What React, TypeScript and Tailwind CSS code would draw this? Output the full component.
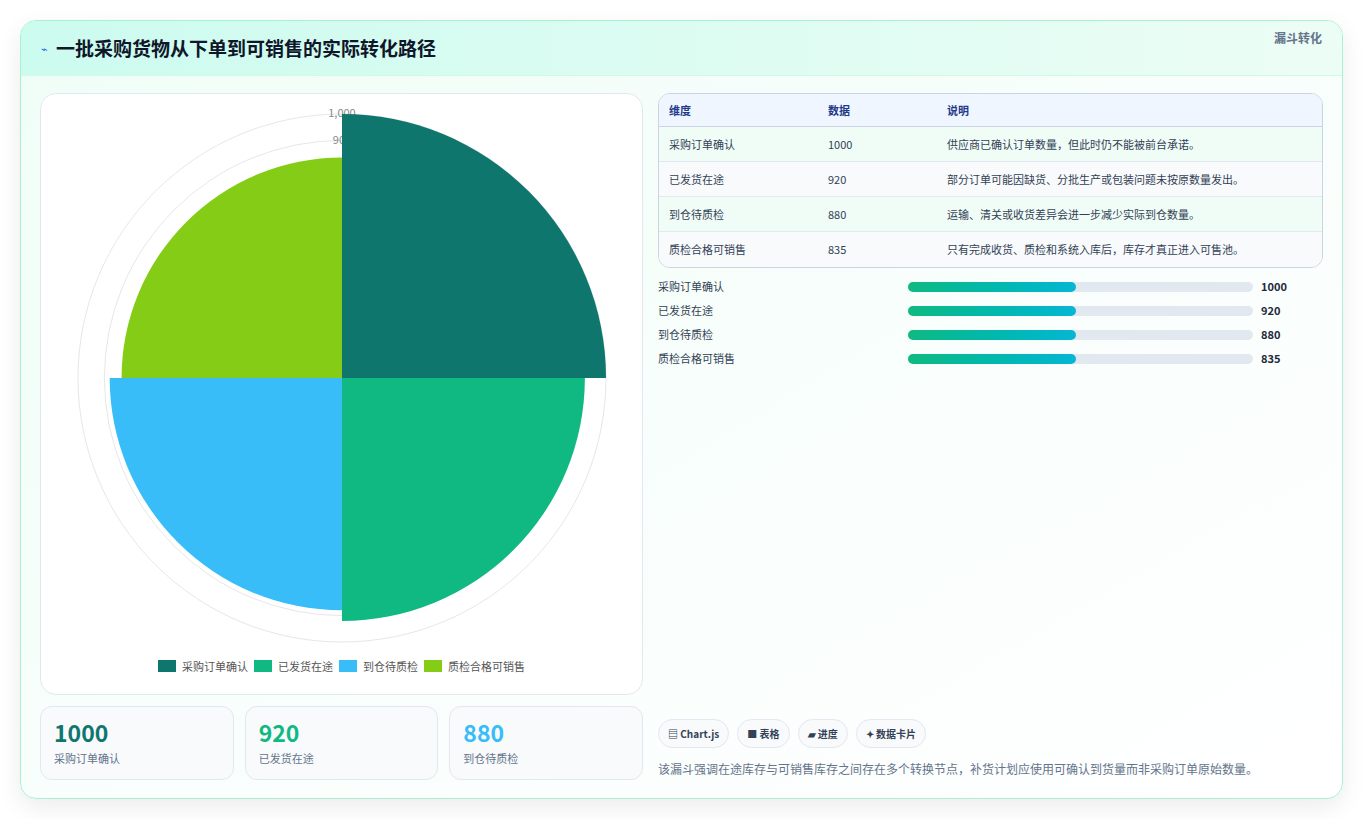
const font = { fontFamily: '"Noto Sans CJK SC", "Noto Sans", sans-serif' };

const rows = [
  { name: '采购订单确认', value: 1000, note: '供应商已确认订单数量，但此时仍不能被前台承诺。', color: '#0f766e' },
  { name: '已发货在途', value: 920, note: '部分订单可能因缺货、分批生产或包装问题未按原数量发出。', color: '#10b981' },
  { name: '到仓待质检', value: 880, note: '运输、清关或收货差异会进一步减少实际到仓数量。', color: '#38bdf8' },
  { name: '质检合格可销售', value: 835, note: '只有完成收货、质检和系统入库后，库存才真正进入可售池。', color: '#84cc16' },
];

function PolarChart() {
  const cx = 301;
  const cy = 284;
  const scale = 0.264;
  const wedge = (r: number, a0: number, a1: number) => {
    const p = (a: number) => [cx + r * Math.sin(a), cy - r * Math.cos(a)];
    const [x0, y0] = p(a0);
    const [x1, y1] = p(a1);
    return `M${cx},${cy} L${x0},${y0} A${r},${r} 0 0 1 ${x1},${y1} Z`;
  };
  return (
    <svg width="602" height="560" className="block">
      {[100, 200, 300, 400, 500, 600, 700, 800, 900, 1000].map(v => (
        <circle key={v} cx={cx} cy={cy} r={v * scale} fill="none" stroke="#e5e7eb" strokeWidth="1" />
      ))}
      <text x={cx} y={cy - 1000 * scale + 3} textAnchor="middle" fontSize="11" fill="#888" style={font}>1,000</text>
      <text x={cx} y={cy - 900 * scale + 4} textAnchor="middle" fontSize="11" fill="#888" style={font}>900</text>
      {rows.map((r, i) => (
        <path key={r.name} d={wedge(r.value * scale, (i * Math.PI) / 2, ((i + 1) * Math.PI) / 2)} fill={r.color} />
      ))}
    </svg>
  );
}

export default function App() {
  return (
    <div className="min-h-screen bg-white p-5" style={font}>
      <div className="overflow-hidden rounded-2xl border border-[#a7f3d0] bg-gradient-to-br from-[#f0fdf7] to-white shadow-[0_8px_24px_rgba(0,0,0,0.08)]">
        <div className="flex h-[55px] items-center justify-between border-b border-[#d1fae5] bg-gradient-to-r from-[#ccfbef] to-[#ecfdf5] px-5">
          <div className="flex items-center gap-2">
            <span className="text-[11px] text-[#2563eb]">⌁</span>
            <h1 className="text-[19px] font-bold text-[#0f172a]">一批采购货物从下单到可销售的实际转化路径</h1>
          </div>
          <span className="-mt-5 text-[12px] font-semibold text-[#64748b]">漏斗转化</span>
        </div>
        <div className="flex gap-[15px] px-[19px] pb-[18px] pt-[17px]">
          <div className="flex w-[603px] flex-col gap-[11px]">
            <div className="flex h-[602px] flex-col rounded-2xl border border-[#e2e8f0] bg-white">
              <PolarChart />
              <div className="flex justify-center gap-[6px] pt-[4px] text-[11px] text-[#555]">
                {rows.map(r => (
                  <div key={r.name} className="flex items-center gap-[6px]">
                    <span className="h-[12px] w-[18px]" style={{ background: r.color }} />
                    <span>{r.name}</span>
                  </div>
                ))}
              </div>
            </div>
            <div className="grid grid-cols-3 gap-[11px]">
              {rows.slice(0, 3).map((r, i) => (
                <div key={r.name} className="h-[74px] rounded-xl border border-[#e2e8f0] bg-[#f8fafc] px-[13px] pt-[10px]">
                  <div className={`text-[23px] font-bold leading-[30px] ${['text-[#0f766e]', 'text-[#10b981]', 'text-[#38bdf8]'][i]}`}>{r.value}</div>
                  <div className="mt-[3px] text-[11px] text-[#64748b]">{r.name}</div>
                </div>
              ))}
            </div>
          </div>
          <div className="flex flex-1 flex-col">
            <div className="overflow-hidden rounded-xl border border-[#cbd5e1] text-[11px]">
              <div className="flex h-[33px] items-center border-b border-[#cbd5e1] bg-[#eff6ff] px-[10px] font-semibold text-[#1e3a8a]">
                <span className="w-[159px]">维度</span>
                <span className="w-[119px]">数据</span>
                <span>说明</span>
              </div>
              {rows.map((r, i) => (
                <div key={r.name} className={`flex h-[35px] items-center px-[10px] text-[#334155] ${i < 3 ? 'border-b border-[#e2e8f0]' : ''} ${i % 2 ? 'bg-[#f8fafc]' : 'bg-[#f0fdf7]'}`}>
                  <span className="w-[159px]">{r.name}</span>
                  <span className="w-[119px]">{r.value}</span>
                  <span>{r.note}</span>
                </div>
              ))}
            </div>
            <div className="mt-[12px] flex flex-col gap-[11px]">
              {rows.map(r => (
                <div key={r.name} className="flex h-[13px] items-center text-[11px] text-[#334155]">
                  <span className="w-[250px]">{r.name}</span>
                  <div className="h-[10px] w-[345px] rounded-full bg-[#e2e8f0]">
                    <div className="h-full w-[168px] rounded-full bg-gradient-to-r from-[#10b981] to-[#06b6d4]" />
                  </div>
                  <span className="ml-[8px] font-bold text-[#1e293b]">{r.value}</span>
                </div>
              ))}
            </div>
            <div className="mt-auto flex gap-[8px] text-[10px] font-semibold text-[#334155]">
              {['▤ Chart.js', '■ 表格', '▰ 进度', '✦ 数据卡片'].map(t => (
                <span key={t} className="flex h-[29px] items-center rounded-full border border-[#e2e8f0] bg-[#f8fafc] px-[9px]">{t}</span>
              ))}
            </div>
            <p className="mb-[2px] mt-[12px] text-[12px] text-[#64748b]">该漏斗强调在途库存与可销售库存之间存在多个转换节点，补货计划应使用可确认到货量而非采购订单原始数量。</p>
          </div>
        </div>
      </div>
    </div>
  );
}
